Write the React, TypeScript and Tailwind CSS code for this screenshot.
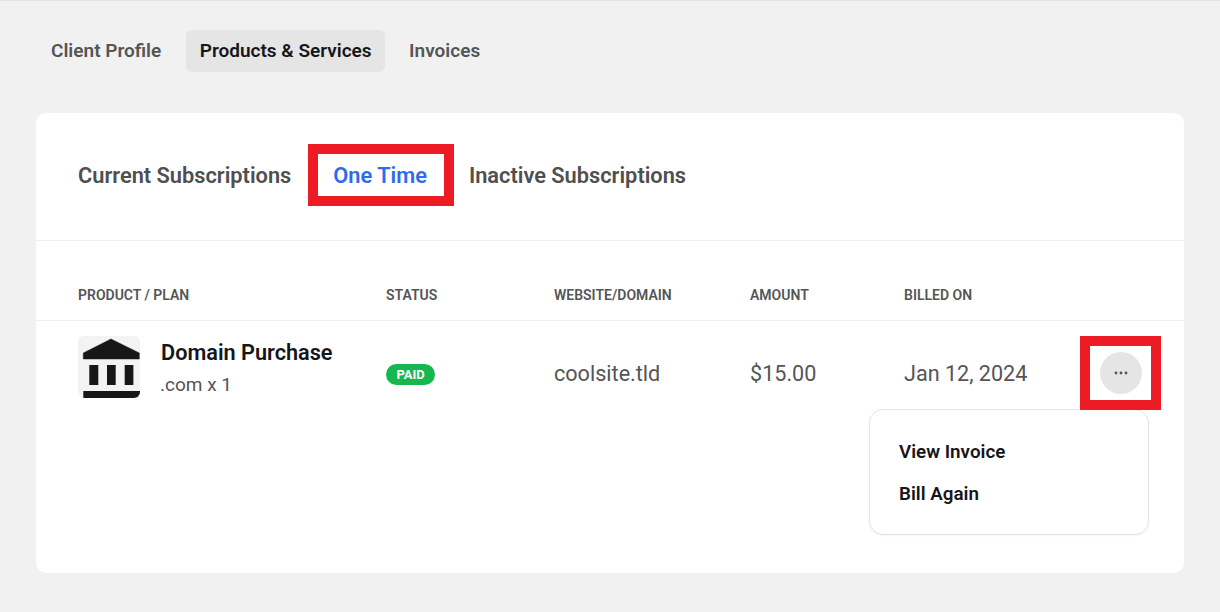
export default function App() {
  const font = { fontFamily: "Roboto, sans-serif" };
  return (
    <div style={font} className="w-[1220px] h-[612px] overflow-hidden bg-[#f1f1f1] border-t border-[#e3e3e3] relative">
      <nav className="flex items-center gap-[11px] h-[42px] mt-[29px] ml-[37px] text-[19px] font-semibold text-[#555555]">
        <div className="px-[14px] h-full flex items-center pt-[1px]">Client Profile</div>
        <div className="px-[13.5px] h-full flex items-center pt-[1px] bg-[#e5e5e5] rounded-[6px] text-[#16161a]">Products &amp; Services</div>
        <div className="px-[13px] h-full flex items-center pt-[1px]">Invoices</div>
      </nav>
      <main className="relative mt-[41px] mx-[36px] h-[460px] bg-white rounded-[10px]">
        <div className="h-[128px] border-b border-[#f0f0f0] flex items-center gap-[42px] pl-[42px] pb-[1px] text-[21.8px] font-semibold text-[#4f4f4f]">
          <span>Current Subscriptions</span>
          <span className="text-[#2f6bed]">One Time</span>
          <span>Inactive Subscriptions</span>
        </div>
        <div className="h-[80px] border-b border-[#f0f0f0] flex items-center pl-[42px] pt-[30px] text-[14px] font-semibold text-[#555555] uppercase">
          <span className="w-[308px]">Product / Plan</span>
          <span className="w-[168px]">Status</span>
          <span className="w-[196px]">Website/Domain</span>
          <span className="w-[154px]">Amount</span>
          <span>Billed on</span>
        </div>
        <div className="flex items-center pl-[42px] h-[106px] pt-[1px] text-[#555555] text-[21.6px]">
          <div className="w-[308px] flex items-start self-start pt-[14px]">
            <div className="w-[62px] h-[62px] rounded-[6px] bg-[#f3f3f3] overflow-hidden">
              <svg width="62" height="62" viewBox="0 0 62 62" fill="#161817">
                <path d="M33 3 L5.3 17 V23 H61.3 V17 Z" stroke="#161817" strokeWidth="0.5" strokeLinejoin="round" />
                <rect x="11.3" y="29" width="9" height="20" />
                <rect x="29" y="29" width="8.7" height="20" />
                <rect x="46.7" y="29" width="8.7" height="20" />
                <rect x="5.3" y="55" width="56.7" height="7" />
              </svg>
            </div>
            <div className="ml-[20px] flex flex-col">
              <span className="text-[21.7px] leading-[26px] font-semibold text-[#16161a] mt-[4px] ml-[1px]">Domain Purchase</span>
              <span className="text-[19px] leading-[26px] mt-[6px]">.com x 1</span>
            </div>
          </div>
          <div className="w-[168px]">
            <span className="block w-fit bg-[#15b74e] text-white text-[13px] font-bold leading-[21px] h-[21px] px-[10.5px] rounded-full">PAID</span>
          </div>
          <span className="w-[196px]">coolsite.tld</span>
          <span className="w-[154px]">$15.00</span>
          <span>Jan 12, 2024</span>
        </div>
        <div className="absolute left-[1064px] top-[239px] w-[42px] h-[42px] rounded-full bg-[#e5e5e5] flex items-center justify-center pb-[1px]">
          <svg width="14" height="4" viewBox="0 0 14 4" fill="#555555">
            <circle cx="2" cy="2" r="1.4" />
            <circle cx="7" cy="2" r="1.4" />
            <circle cx="12" cy="2" r="1.4" />
          </svg>
        </div>
        <div className="absolute left-[833px] top-[296px] w-[280px] h-[126px] bg-white border border-[#e3e3e3] rounded-[14px] pt-[21px] pl-[29px] text-[18.8px] font-semibold text-[#16161a] shadow-[0_1px_2px_rgba(0,0,0,0.04)]">
          <div className="leading-[42px]">View Invoice</div>
          <div className="leading-[42px]">Bill Again</div>
        </div>
      </main>
      <div className="absolute left-[308px] top-[143px] w-[146px] h-[62px] border-[10px] border-[#ed1c24]" />
      <div className="absolute left-[1080px] top-[335px] w-[81px] h-[74px] border-[10px] border-[#ed1c24]" />
    </div>
  );
}
